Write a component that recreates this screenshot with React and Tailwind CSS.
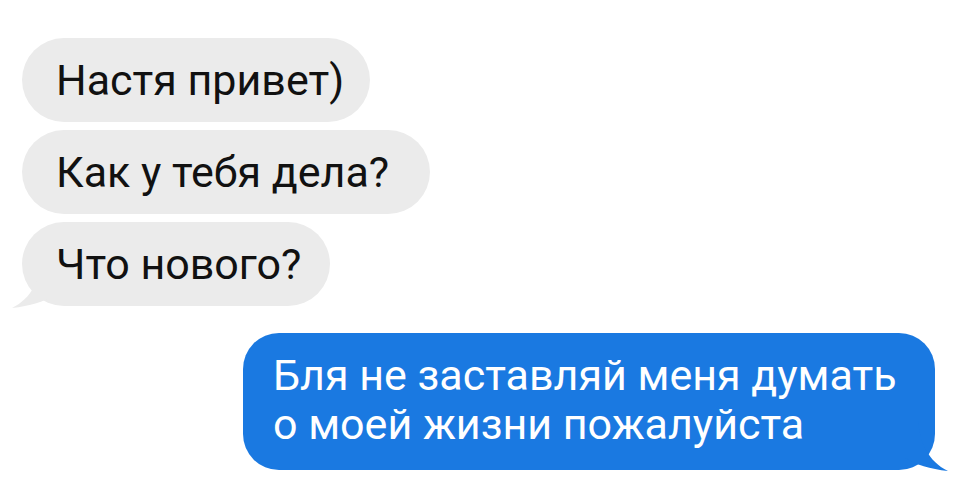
export default function App() {
  return (
    <div className="w-[960px] h-[494px] bg-white overflow-hidden relative font-['Roboto',_'Liberation_Sans',_sans-serif]">
      <div className="flex flex-col items-start gap-2 pt-[38px] pl-[22px]">
        <div className="w-[348px] h-[84px] rounded-full bg-[#ebebeb] pl-[34px] flex items-center text-[43px] text-[#111]">
          Настя привет)
        </div>
        <div className="w-[408px] h-[84px] rounded-full bg-[#ebebeb] pl-[34px] flex items-center text-[43px] text-[#111]">
          Как у тебя дела?
        </div>
        <div className="relative w-[308px] h-[84px] rounded-full bg-[#ebebeb] pl-[34px] flex items-center text-[43px] text-[#111]">
          <svg className="absolute left-[-10px] bottom-[-2px]" width="60" height="50" viewBox="0 0 60 50">
            <path d="M30 0 C28 22 20 40 0 50 C18 48 32 44 44 36 L60 36 L60 0 Z" fill="#ebebeb" />
          </svg>
          <span className="relative">Что нового?</span>
        </div>
      </div>
      <div className="flex justify-end pr-[25px] mt-[27px]">
        <div className="relative w-[692px] h-[137px] rounded-[36px] bg-[#1a79e1] pl-[30px] pt-[18px] text-[43px] leading-[49px] text-white">
          <svg className="absolute right-[-13px] bottom-[-1px]" width="60" height="50" viewBox="0 0 60 50">
            <path d="M30 0 C32 22 40 40 60 50 C42 48 28 44 16 36 L0 36 L0 0 Z" fill="#1a79e1" />
          </svg>
          <div className="relative">Бля не заставляй меня думать</div>
          <div className="relative">о моей жизни пожалуйста</div>
        </div>
      </div>
    </div>
  );
}
